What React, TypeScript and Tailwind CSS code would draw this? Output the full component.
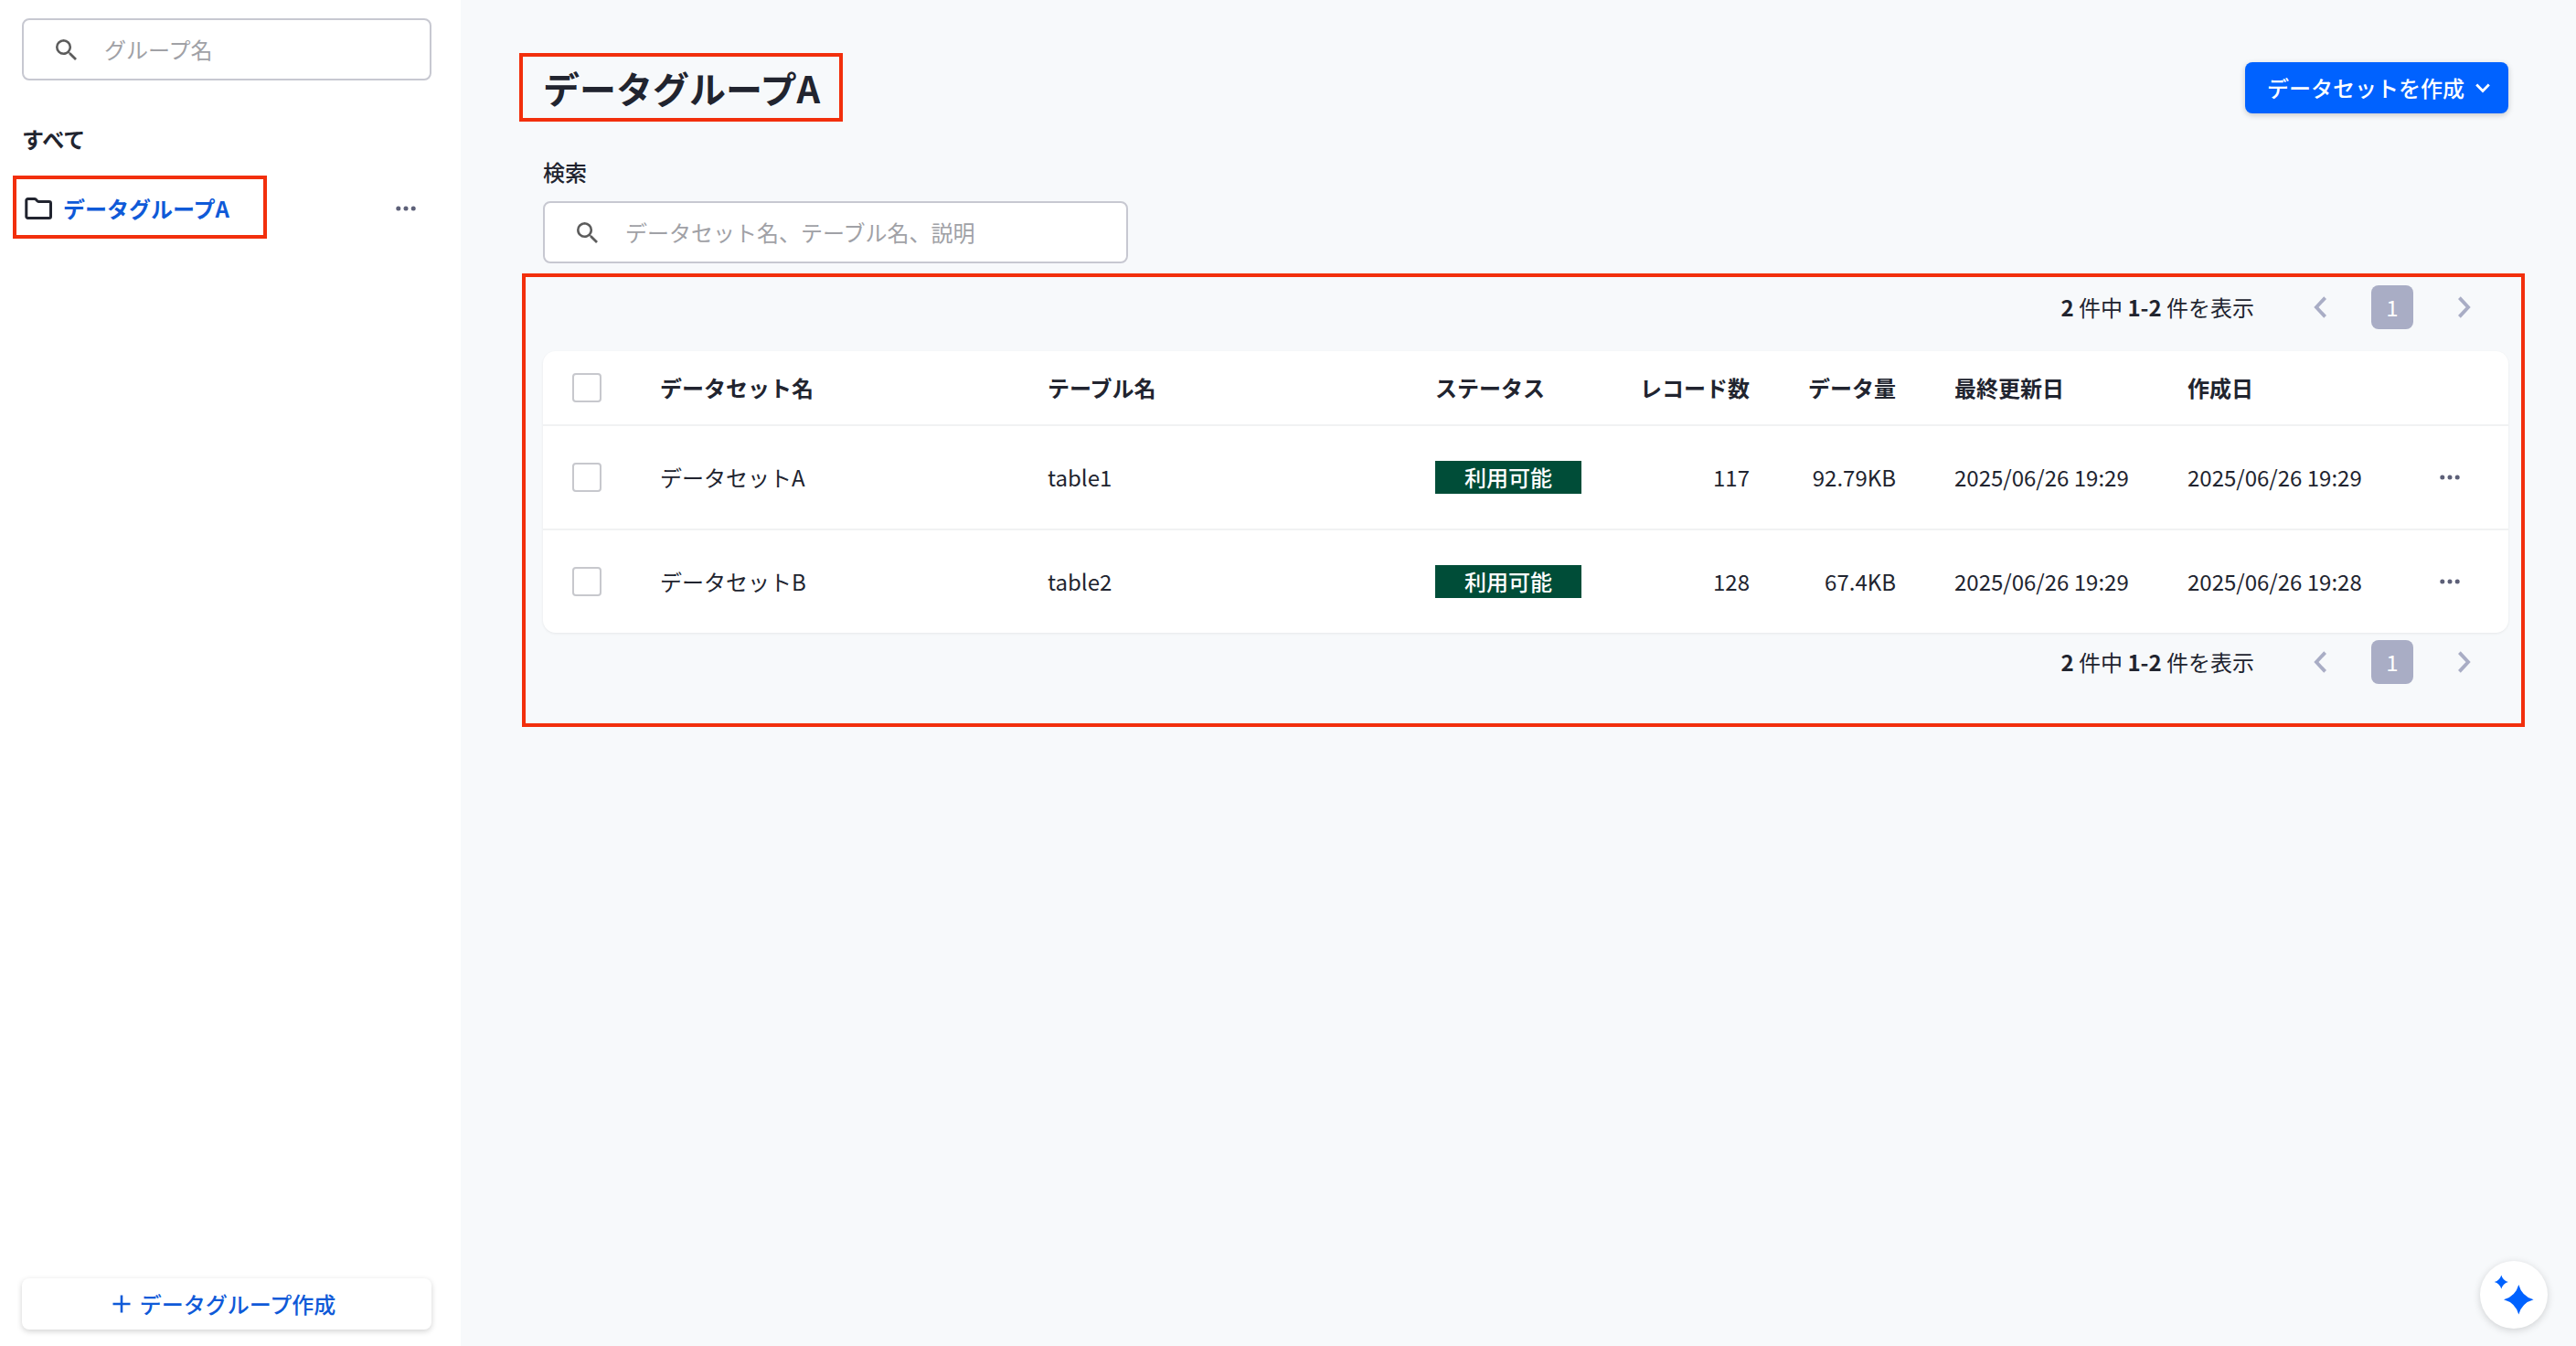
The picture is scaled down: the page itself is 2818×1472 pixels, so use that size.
import type { ReactNode } from "react";
import clsx from "clsx";

const rows = [
	{
		name: "データセットA",
		table: "table1",
		status: "利用可能",
		records: "117",
		size: "92.79KB",
		updated: "2025/06/26 19:29",
		created: "2025/06/26 19:29",
	},
	{
		name: "データセットB",
		table: "table2",
		status: "利用可能",
		records: "128",
		size: "67.4KB",
		updated: "2025/06/26 19:29",
		created: "2025/06/26 19:28",
	},
];

const cols =
	"grid grid-cols-[96px_424px_424px_224px_184px_160px_255px_255px_128px] items-center border-[#f1f2f3]";

function SearchIcon() {
	return (
		<svg viewBox="3 3 17.49 17.49" className="size-[23px] shrink-0 fill-[#5c5c5c]">
			<path d="M15.5 14h-.79l-.28-.27A6.471 6.471 0 0 0 16 9.5 6.5 6.5 0 1 0 9.5 16c1.61 0 3.09-.59 4.23-1.57l.27.28v.79l5 4.99L20.49 19l-4.99-5zm-6 0C7.01 14 5 11.99 5 9.5S7.01 5 9.5 5 14 7.01 14 9.5 11.99 14 9.5 14z" />
		</svg>
	);
}

function FolderIcon() {
	return (
		<svg viewBox="0 0 32 26" className="h-[26px] w-8 shrink-0 fill-none stroke-[#21242f] stroke-[3]">
			<path
				strokeLinejoin="round"
				d="M4.5 2.5h7.2c.7 0 1.2.2 1.7.7l1.4 1.5c.5.5 1 .8 1.7.8h11.3c1 0 1.7.7 1.7 1.7v14.6c0 1-.7 1.7-1.7 1.7H4.5c-1 0-1.7-.7-1.7-1.7V4.2c0-1 .7-1.7 1.7-1.7z"
			/>
		</svg>
	);
}

function Dots() {
	return (
		<svg viewBox="0 0 22 6" className="h-1.5 w-[22px] shrink-0 fill-[#5d6078]">
			<circle cx="2.8" cy="3" r="2.5" />
			<circle cx="11" cy="3" r="2.5" />
			<circle cx="19.2" cy="3" r="2.5" />
		</svg>
	);
}

function Arrow({ flip }: { flip?: boolean }) {
	return (
		<svg
			viewBox="0 0 14 24"
			className={clsx("h-6 w-3.5 fill-none stroke-[#a9adc5] stroke-[3.8]", flip && "rotate-180")}
		>
			<path d="M12.6 1.6 2.9 12l9.7 10.4" />
		</svg>
	);
}

// red annotation frame drawn over its parent
function Mark({ className }: { className: string }) {
	return <div className={clsx("pointer-events-none absolute border-4 border-[#f22f0c]", className)} />;
}

function SearchField({ className, children }: { className: string; children: ReactNode }) {
	return (
		<div
			className={clsx(
				"flex h-[68px] items-center gap-[30px] rounded-lg border-2 border-[#c7c8d1] bg-white pl-[35px] text-[#a0a1a6]",
				className,
			)}
		>
			<SearchIcon />
			<span>{children}</span>
		</div>
	);
}

function Checkbox() {
	return <div className="ml-8 size-8 rounded-[4px] border-2 border-[#c7c8cd] bg-white" />;
}

function Pager() {
	return (
		<div className="flex h-12 items-center justify-end pr-[41px]">
			<p className="mr-[65px]">
				<b>2</b> 件中 <b>1-2</b> 件を表示
			</p>
			<Arrow />
			<div className="mx-[49px] flex h-12 w-[46px] items-center justify-center rounded-lg bg-[#a9adc5] text-white">
				1
			</div>
			<Arrow flip />
		</div>
	);
}

function Sidebar() {
	return (
		<aside className="flex w-[504px] shrink-0 flex-col bg-white px-6 pt-5 pb-[18px]">
			<SearchField className="w-[448px]">グループ名</SearchField>
			<div className="mt-[46px] h-9 leading-9 font-bold">すべて</div>
			<div className="relative mt-10 flex h-9 items-center">
				<Mark className="-top-[18px] -left-2.5 h-[69px] w-[278px]" />
				<div className="ml-0.5">
					<FolderIcon />
				</div>
				<span className="ml-[11px] font-bold text-[#0f5ad8]">データグループA</span>
				<div className="mr-[25px] ml-auto">
					<Dots />
				</div>
			</div>
			<button className="mt-auto flex h-14 w-[448px] items-center justify-center rounded-lg bg-white pr-1.5 font-medium text-[#0f5ad8] shadow-[0_2px_6px_rgba(0,0,0,0.18)]">
				<svg viewBox="0 0 20 20" className="mr-2.5 size-5 fill-none stroke-current stroke-[2.6]">
					<path d="M10 .5v19M.5 10h19" />
				</svg>
				データグループ作成
			</button>
		</aside>
	);
}

function DatasetTable() {
	return (
		<div className="overflow-hidden rounded-[14px] bg-white shadow-[0_1px_3px_rgba(0,0,0,0.07)]">
			<div className={clsx(cols, "h-[82px] border-b-2 font-bold")}>
				<Checkbox />
				<span className="pl-8">データセット名</span>
				<span className="pl-8">テーブル名</span>
				<span className="pl-8">ステータス</span>
				<span className="pr-8 text-right">レコード数</span>
				<span className="pr-8 text-right">データ量</span>
				<span className="pl-8">最終更新日</span>
				<span className="pl-8">作成日</span>
			</div>
			{rows.map((row) => (
				<div key={row.name} className={clsx(cols, "h-[114px] border-b-2 last:h-28 last:border-b-0")}>
					<Checkbox />
					<span className="pl-8">{row.name}</span>
					<span className="pl-8">{row.table}</span>
					<div className="pl-8">
						<div className="flex h-9 w-40 items-center justify-center bg-[#004d38] font-medium text-white">
							{row.status}
						</div>
					</div>
					<span className="pr-8 text-right">{row.records}</span>
					<span className="pr-8 text-right">{row.size}</span>
					<span className="pl-8">{row.updated}</span>
					<span className="pl-8">{row.created}</span>
					<div className="flex justify-center">
						<Dots />
					</div>
				</div>
			))}
		</div>
	);
}

export default function App() {
	return (
		<div className="relative flex h-[1472px] w-[2818px] overflow-hidden bg-[#f7f9fb] font-['Noto_Sans_CJK_JP',sans-serif] text-2xl leading-9 text-[#21242f]">
			<Sidebar />
			<main className="flex w-[2240px] flex-col pt-[68px] pl-[90px]">
				<div className="flex h-14 items-center justify-between">
					<div className="relative">
						<Mark className="-top-2.5 -left-[26px] h-[75px] w-[354px]" />
						<h1 className="text-[40px] leading-14 font-bold">データグループA</h1>
					</div>
					<button className="flex h-14 w-72 items-center rounded-lg bg-[#0062ff] pl-6 font-medium text-white shadow-[0_2px_6px_rgba(0,0,0,0.2)]">
						データセットを作成
						<svg viewBox="0 0 16 11" className="ml-3 h-[11px] w-4 fill-none stroke-white stroke-[2.8]">
							<path d="m1.2 1.6 6.8 7 6.8-7" />
						</svg>
					</button>
				</div>
				<div className="mt-[46px] font-medium">検索</div>
				<SearchField className="mt-3.5 w-[640px]">データセット名、テーブル名、説明</SearchField>
				<section className="relative mt-6 h-[460px]">
					<Mark className="-top-[13px] -left-[23px] h-[496px] w-[2191px]" />
					<Pager />
					<div className="mt-6 mb-2">
						<DatasetTable />
					</div>
					<Pager />
				</section>
			</main>
			<button className="absolute top-[1379px] left-[2713px] size-[74px] rounded-full bg-white shadow-[0_2px_8px_rgba(0,0,0,0.16)]">
				<svg viewBox="0 0 74 74" className="size-[74px] fill-[#0062ff]">
					<path d="M42.3 26Q45.8 38.8 58.6 42.3 45.8 45.8 42.3 58.6 38.8 45.8 26 42.3 38.8 38.8 42.3 26z" />
					<path d="M23.3 15.4Q25 21.3 30.9 23 25 24.7 23.3 30.6 21.6 24.7 15.7 23 21.6 21.3 23.3 15.4z" />
				</svg>
			</button>
		</div>
	);
}
